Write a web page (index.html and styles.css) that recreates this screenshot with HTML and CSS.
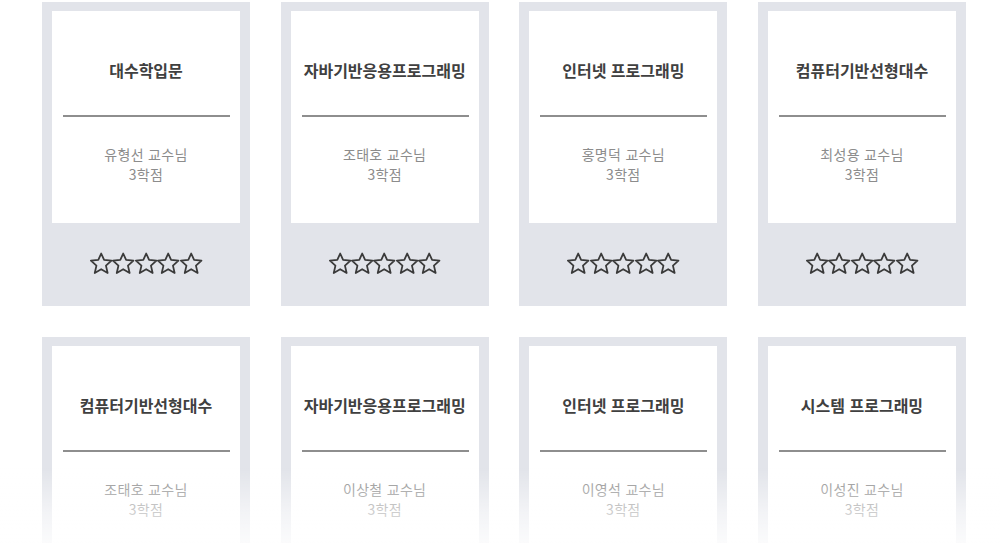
FILE: index.html
```html
<!DOCTYPE html>
<html lang="ko">
<head>
<meta charset="utf-8">
<link rel="stylesheet" href="styles.css">
</head>
<body>
<svg class="defs" width="0" height="0">
  <symbol id="star" viewBox="0 0 24 24" overflow="visible">
    <path d="M12 1.6L15.1 8.5 23 9.3 17.1 14.6 18.9 22.5 12 18.5 5.1 22.5 6.9 14.6 1 9.3 8.9 8.5Z" fill="none" stroke="#3a3a3a" stroke-width="1.9" stroke-linejoin="round"/>
  </symbol>
</svg>
<main class="grid">
  <div class="card"><div class="info"><h2 class="title">대수학입문</h2><hr class="rule"><p class="meta">유형선 교수님</p><p class="meta">3학점</p></div><div class="rating"><svg class="star"><use href="#star"/></svg><svg class="star"><use href="#star"/></svg><svg class="star"><use href="#star"/></svg><svg class="star"><use href="#star"/></svg><svg class="star"><use href="#star"/></svg></div></div>
  <div class="card"><div class="info"><h2 class="title">자바기반응용프로그래밍</h2><hr class="rule"><p class="meta">조태호 교수님</p><p class="meta">3학점</p></div><div class="rating"><svg class="star"><use href="#star"/></svg><svg class="star"><use href="#star"/></svg><svg class="star"><use href="#star"/></svg><svg class="star"><use href="#star"/></svg><svg class="star"><use href="#star"/></svg></div></div>
  <div class="card"><div class="info"><h2 class="title">인터넷 프로그래밍</h2><hr class="rule"><p class="meta">홍명덕 교수님</p><p class="meta">3학점</p></div><div class="rating"><svg class="star"><use href="#star"/></svg><svg class="star"><use href="#star"/></svg><svg class="star"><use href="#star"/></svg><svg class="star"><use href="#star"/></svg><svg class="star"><use href="#star"/></svg></div></div>
  <div class="card"><div class="info"><h2 class="title">컴퓨터기반선형대수</h2><hr class="rule"><p class="meta">최성용 교수님</p><p class="meta">3학점</p></div><div class="rating"><svg class="star"><use href="#star"/></svg><svg class="star"><use href="#star"/></svg><svg class="star"><use href="#star"/></svg><svg class="star"><use href="#star"/></svg><svg class="star"><use href="#star"/></svg></div></div>
  <div class="card"><div class="info"><h2 class="title">컴퓨터기반선형대수</h2><hr class="rule"><p class="meta">조태호 교수님</p><p class="meta">3학점</p></div><div class="rating"><svg class="star"><use href="#star"/></svg><svg class="star"><use href="#star"/></svg><svg class="star"><use href="#star"/></svg><svg class="star"><use href="#star"/></svg><svg class="star"><use href="#star"/></svg></div></div>
  <div class="card"><div class="info"><h2 class="title">자바기반응용프로그래밍</h2><hr class="rule"><p class="meta">이상철 교수님</p><p class="meta">3학점</p></div><div class="rating"><svg class="star"><use href="#star"/></svg><svg class="star"><use href="#star"/></svg><svg class="star"><use href="#star"/></svg><svg class="star"><use href="#star"/></svg><svg class="star"><use href="#star"/></svg></div></div>
  <div class="card"><div class="info"><h2 class="title">인터넷 프로그래밍</h2><hr class="rule"><p class="meta">이영석 교수님</p><p class="meta">3학점</p></div><div class="rating"><svg class="star"><use href="#star"/></svg><svg class="star"><use href="#star"/></svg><svg class="star"><use href="#star"/></svg><svg class="star"><use href="#star"/></svg><svg class="star"><use href="#star"/></svg></div></div>
  <div class="card"><div class="info"><h2 class="title">시스템 프로그래밍</h2><hr class="rule"><p class="meta">이성진 교수님</p><p class="meta">3학점</p></div><div class="rating"><svg class="star"><use href="#star"/></svg><svg class="star"><use href="#star"/></svg><svg class="star"><use href="#star"/></svg><svg class="star"><use href="#star"/></svg><svg class="star"><use href="#star"/></svg></div></div>
</main>
<div class="fade"></div>
</body>
</html>
```

FILE: styles.css
```css
html, body {
  margin: 0;
  padding: 0;
  background: #ffffff;
  overflow: hidden;
  height: 543px;
}
body {
  font-family: "Noto Sans CJK KR", "Noto Sans", sans-serif;
}
.defs {
  position: absolute;
  width: 0;
  height: 0;
}
.grid {
  display: grid;
  grid-template-columns: repeat(4, 208px);
  column-gap: 30.67px;
  row-gap: 31px;
  padding: 2px 0 0 42px;
}
.card {
  background: #e2e4ea;
  padding: 9px 10px 0 10px;
  height: 304px;
  box-sizing: border-box;
  display: flex;
  flex-direction: column;
}
.info {
  background: #ffffff;
  height: 212px;
  box-sizing: border-box;
  padding-top: 49px;
  text-align: center;
}
.title {
  margin: 0;
  font-size: 16px;
  line-height: 20px;
  font-weight: 700;
  color: #404040;
}
.rule {
  margin: 35px 10px 0 11px;
  border: 0;
  height: 2px;
  background: #8e8e8e;
}
.meta {
  margin: 0;
  font-size: 14px;
  line-height: 20px;
  letter-spacing: 0.3px;
  color: #8c8c8c;
}
.rule + .meta {
  margin-top: 27px;
}
.rating {
  flex: 1;
  display: flex;
  justify-content: center;
  align-items: center;
  padding-bottom: 2px;
}
.star {
  width: 22.4px;
  height: 22.4px;
  overflow: visible;
}
.fade {
  position: fixed;
  left: 0;
  right: 0;
  bottom: 0;
  height: 75px;
  background: linear-gradient(to bottom, rgba(255,255,255,0) 0%, rgba(255,255,255,0.55) 55%, rgba(255,255,255,0.85) 100%);
  pointer-events: none;
}
```
